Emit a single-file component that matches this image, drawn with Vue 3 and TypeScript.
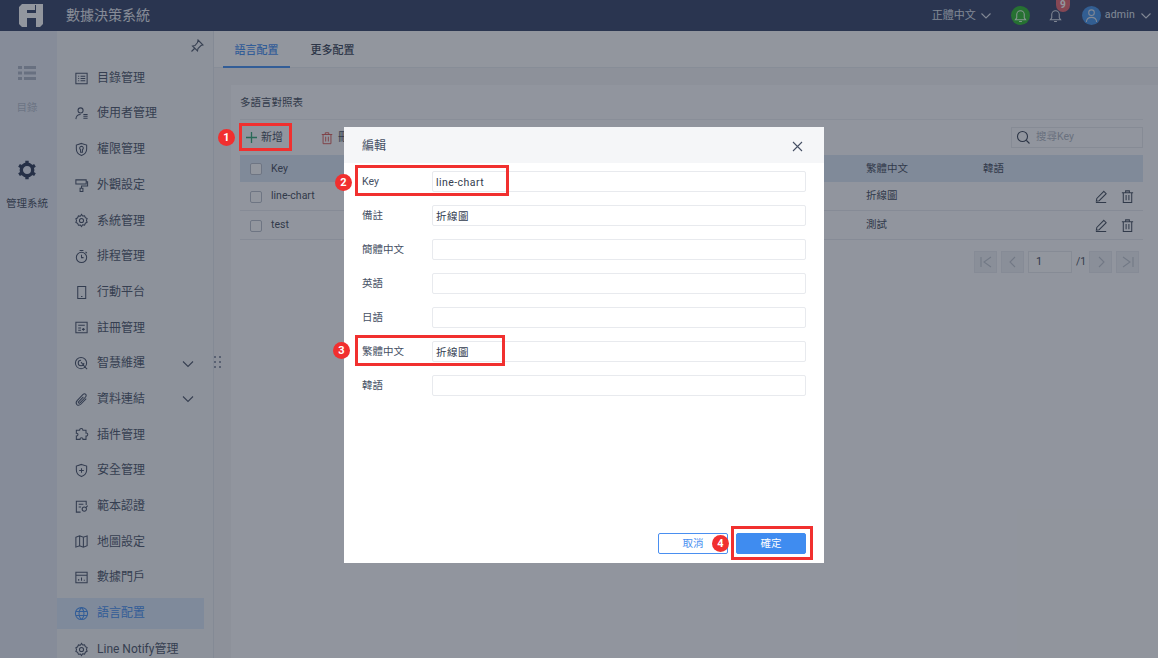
<script setup lang="ts">
const I: Record<string, string> = {
  list: 'M2 2.500h12v11H2zM4.500 5.500h1M7 5.500h5M4.500 8h1M7 8h5M4.500 10.500h1M7 10.500h5',
  user: 'M7 2a2.700 2.700 0 1 1 0 5.400A2.700 2.700 0 0 1 7 2zM2 14c.3-3.200 2.300-5 5-5M10 9h4.500M10 11h4.500M10 13h4.500',
  shield: 'M8 1.500l5.500 1.800v4.200c0 3.400-2.300 5.800-5.500 7-3.200-1.200-5.500-3.600-5.500-7V3.300zM8 4.500a2 2 0 0 1 1 3.700V11H7V8.200a2 2 0 0 1 1-3.700z',
  brush: 'M2 2h11v4.500H2zM13 4h1.500v4.500H8V11M6.500 11h3v3.500h-3z',
  gear: 'M8 1.500l1.200 1.700 2.100-.3.800 2 1.900 1-.7 2 .7 2-1.900 1-.8 2-2.100-.3L8 14.500l-1.200-1.700-2.100.3-.8-2-1.900-1 .7-2-.7-2 1.900-1 .8-2 2.100.3zM8 5.800a2.200 2.200 0 1 1 0 4.400 2.200 2.200 0 0 1 0-4.400z',
  clock: 'M8 3.500a5.500 5.500 0 1 1 0 11 5.500 5.500 0 0 1 0-11zM8 6v3.200h2.200M6 1.500h4M12.300 3l1.400 1.400',
  phone: 'M4 1.500h8.500v13H4zM7.500 12.300h1.500',
  reg: 'M2 2.500h12v11H2zM4.500 5.500h7M4.500 8.500h3M4.500 11h3M10 8.500v3M8.500 10h3',
  smart: 'M14 14l-2.500-2.500M7.500 1.500a6 6 0 1 1 0 12 6 6 0 0 1-6-6 6 6 0 0 1 6-6zM7.500 4.500a3 3 0 1 0 3 3M7.500 6.500l4 5',
  clip: 'M13 7l-5.500 5.800c-1.400 1.400-3.200 1.700-4.400.6-1.200-1.200-.9-3 .5-4.500l5.800-6c1-1 2.300-1.200 3.100-.4.800.8.600 2.100-.4 3.100l-5.700 5.900c-.5.500-1.100.6-1.500.2-.4-.4-.3-1 .2-1.500L10 5.300',
  puzzle: 'M6 3.500c0-2.500 3.500-2.500 3.500 0h3.300v3c2.500-.4 2.500 3.500 0 3.200v3.500H9.500c.3-2.300-3.300-2.300-3 0H2.500v-3.700c2.300.4 2.300-3.200 0-2.800V3.500z',
  plusShield: 'M8 1.500l5.500 1.800v4.200c0 3.400-2.300 5.800-5.500 7-3.200-1.200-5.500-3.600-5.500-7V3.300zM8 5.500v5M5.500 8h5',
  cert: 'M13 6.500V2.500H2.500v11.500H7M5 5.500h5M5 8.500h2.500M11 8.500a2.300 2.300 0 1 1 0 4.600 2.300 2.300 0 0 1 0-4.600zM14.500 7l-2 2.500',
  map: 'M2 3.500l4-1.500 4 1.500 4-1.500v10.500l-4 1.500-4-1.500-4 1.500zM6 2v10.500M10 3.500V14',
  portal: 'M2 2.500h12v11H2zM2 5.500h12M5 11.500V9.500M8 11.500V8M11 11.500v-1',
  globe: 'M8 1.500a6.500 6.500 0 1 1 0 13 6.500 6.500 0 0 1 0-13zM8 1.500c-3.600 3.800-3.600 9.200 0 13M8 1.500c3.600 3.800 3.600 9.200 0 13M2 5.800h12M2 10.200h12',
}
const menu = [
  { t: '目錄管理', i: I.list }, { t: '使用者管理', i: I.user }, { t: '權限管理', i: I.shield }, { t: '外觀設定', i: I.brush },
  { t: '系統管理', i: I.gear }, { t: '排程管理', i: I.clock }, { t: '行動平台', i: I.phone }, { t: '註冊管理', i: I.reg },
  { t: '智慧維運', i: I.smart, more: true }, { t: '資料連結', i: I.clip, more: true }, { t: '插件管理', i: I.puzzle },
  { t: '安全管理', i: I.plusShield }, { t: '範本認證', i: I.cert }, { t: '地圖設定', i: I.map }, { t: '數據門戶', i: I.portal },
  { t: '語言配置', i: I.globe, active: true }, { t: 'Line Notify管理', i: I.gear },
]
const rows = [{ k: 'line-chart', v: '折線圖' }, { k: 'test', v: '測試' }]
const fields = [
  { l: 'Key', v: 'line-chart' }, { l: '備註', v: '折線圖' }, { l: '簡體中文', v: '' }, { l: '英語', v: '' },
  { l: '日語', v: '' }, { l: '繁體中文', v: '折線圖' }, { l: '韓語', v: '' },
]
const pencil = 'M10.500 2.500l2.500 2.500-7.500 7.500-3 .5.500-3zM2 14.500h11'
const trash = 'M2 4h12M6 4V2h4v2M3.500 4v10.500h9V4M6.500 6.500v5.500M9.500 6.500v5.500'
</script>

<template>
  <div class="page">
    <header class="top">
      <svg class="logo" width="24" height="23" viewBox="0 0 24 23"><path fill-rule="evenodd" d="M3 0H24V20L21 23H17V14H8V23H3L0 20V3zM8 6H16V1H17V9H8z"/></svg>
      <span class="brand">數據決策系統</span>
      <div class="top-right">
        <span class="lang">正體中文</span>
        <svg class="chev" width="12" height="12" viewBox="0 0 12 12"><path d="M1.500 3.500L6 8l4.500-4.500"/></svg>
        <span class="green"><svg width="15" height="15" viewBox="0 0 16 16"><path d="M2.500 12.500h11l-1.500-2V7a4 4 0 0 0-8 0v3.500zM6.500 14.500h3"/></svg></span>
        <span class="bell">
          <svg width="15" height="15" viewBox="0 0 16 16"><path d="M2.500 12.500h11l-1.500-2V7a4 4 0 0 0-8 0v3.500zM6.500 14.500h3"/></svg>
          <b class="count">9</b>
        </span>
        <span class="avatar"><svg width="15" height="15" viewBox="0 0 16 16"><path d="M8 2a3 3 0 1 1 0 6 3 3 0 0 1 0-6zM2.500 15c.3-3.500 2.500-5 5.500-5s5.200 1.500 5.500 5"/></svg></span>
        <span class="admin">admin</span>
        <svg class="chev" width="12" height="12" viewBox="0 0 12 12"><path d="M1.500 3.500L6 8l4.500-4.500"/></svg>
      </div>
    </header>

    <div class="main">
      <aside class="rail">
        <div class="rail-item first">
          <svg width="18" height="14" viewBox="0 0 18 14" class="filled"><path d="M0 0h4v3H0zM6 0h12v3H6zM0 5.500h4v3H0zM6 5.500h12v3H6zM0 11h4v3H0zM6 11h12v3H6z"/></svg>
          <span class="rail-text">目錄</span>
        </div>
        <div class="rail-item second">
          <svg class="big-gear" width="20" height="20" viewBox="0 0 20 20"><circle cx="10" cy="10" r="5.700"/><path d="M10 .8V3.500M10 16.500V19.200M2.030 5.400L4.370 6.750M17.970 5.400L15.630 6.750M2.030 14.600L4.370 13.250M17.970 14.600L15.630 13.250"/></svg>
          <span class="rail-text">管理系統</span>
        </div>
      </aside>

      <nav class="menu">
        <div class="pin">
          <svg width="14" height="14" viewBox="0 0 14 14"><path d="M8 1l5 5-2 .5-3 3-.5 2.500-5-5L5 6.500l2.500-3zM4.500 9.500L1.500 12.500"/></svg>
        </div>
        <div v-for="m in menu" :key="m.t" class="item" :class="{ active: m.active }">
          <svg class="ico" width="16" height="16" viewBox="0 0 16 16"><path :d="m.i"/></svg>
          <span class="item-text">{{ m.t }}</span>
          <svg v-if="m.more" class="more" width="12" height="12" viewBox="0 0 12 12"><path d="M1 3.500L6 8.500l5-5"/></svg>
        </div>
      </nav>

      <section class="content">
        <div class="grip"><i></i><i></i><i></i><i></i><i></i><i></i></div>
        <div class="tabs">
          <span class="tab on">語言配置</span>
          <span class="tab">更多配置</span>
        </div>
        <div class="card">
          <div class="card-title">多語言對照表</div>
          <div class="tools">
            <span class="tool add">
              <svg width="11" height="11" viewBox="0 0 11 11"><path d="M5.500 0v11M0 5.500h11"/></svg>
              新增
            </span>
            <span class="tool del">
              <svg width="14" height="14" viewBox="0 0 16 16"><path :d="trash"/></svg>
              刪除
            </span>
            <label class="search">
              <svg width="15" height="15" viewBox="0 0 15 15"><path d="M6.500 1.500a5 5 0 1 1 0 10 5 5 0 0 1 0-10zM10.500 10.500l3 3"/></svg>
              搜尋Key
            </label>
          </div>
          <div class="tr head">
            <span class="box"></span><span>Key</span><span>繁體中文</span><span>韓語</span><span></span>
          </div>
          <div v-for="r in rows" :key="r.k" class="tr">
            <span class="box"></span><span>{{ r.k }}</span><span>{{ r.v }}</span><span></span>
            <span class="acts">
              <svg width="15" height="15" viewBox="0 0 16 16"><path :d="pencil"/></svg>
              <svg width="15" height="15" viewBox="0 0 16 16"><path :d="trash"/></svg>
            </span>
          </div>
          <div class="pager">
            <span class="pg"><svg width="14" height="14" viewBox="0 0 14 14"><path d="M2 2v10M12 2L5 7l7 5"/></svg></span>
            <span class="pg"><svg width="14" height="14" viewBox="0 0 14 14"><path d="M9 2L4 7l5 5"/></svg></span>
            <span class="pg-input">1</span>
            <span class="pg-total">/1</span>
            <span class="pg"><svg width="14" height="14" viewBox="0 0 14 14"><path d="M5 2l5 5-5 5"/></svg></span>
            <span class="pg"><svg width="14" height="14" viewBox="0 0 14 14"><path d="M12 2v10M2 2l7 5-7 5"/></svg></span>
          </div>
        </div>
      </section>
    </div>

    <div class="mask"></div>

    <div class="dialog">
      <div class="dlg-head">
        <span>編輯</span>
        <svg width="11" height="11" viewBox="0 0 11 11"><path d="M1 1l9 9M10 1l-9 9"/></svg>
      </div>
      <div class="dlg-body">
        <div v-for="f in fields" :key="f.l" class="field">
          <span class="f-label">{{ f.l }}</span>
          <span class="f-input">{{ f.v }}</span>
        </div>
      </div>
      <div class="dlg-foot">
        <span class="btn ghost">取消</span>
        <span class="btn primary">確定</span>
      </div>
    </div>

    <i class="mark m1"></i><i class="mark m2"></i><i class="mark m3"></i><i class="mark m4"></i>
    <b class="dot d1">1</b><b class="dot d2">2</b><b class="dot d3">3</b><b class="dot d4">4</b>
  </div>
</template>

<style>
html, body { margin: 0; padding: 0; }
</style>

<style scoped>
.page {
  position: relative; width: 1158px; height: 658px; overflow: hidden;
  display: flex; flex-direction: column; background: #f3f4f6;
  font: 12px/1.2 Roboto, "Noto Sans CJK TC", sans-serif; color: #3d4757;
}
svg { fill: none; stroke: currentColor; stroke-width: 1.100; flex: none; display: block; }
svg.filled { fill: currentColor; stroke: none; }

.top { height: 31px; flex: none; background: #2e3c62; color: #fff; display: flex; align-items: center; padding-left: 19px; }
.logo { fill: #fff; stroke: none; }
.brand { margin-left: 23px; font-size: 14px; color: #e8eaf0; }
.top-right { margin-left: auto; display: flex; align-items: center; color: #dfe3ec; }
.lang { font-size: 11px; }
.top-right .chev { margin-left: 4px; }
.green { width: 19px; height: 19px; margin-left: 19px; border-radius: 50%; background: #27b427; display: flex; align-items: center; justify-content: center; color: #e8ffe8; }
.bell { position: relative; margin-left: 18px; width: 16px; }
.count { position: absolute; left: 8px; top: -9px; width: 14px; height: 13px; border-radius: 0 0 7px 7px; background: #e5616b; color: #fff; font: 700 10px/11px Roboto, sans-serif; text-align: center; }
.avatar { width: 19px; height: 19px; margin-left: 18px; border-radius: 50%; background: #3e8fe6; display: flex; align-items: center; justify-content: center; }
.admin { margin-left: 4px; font-size: 10.500px; letter-spacing: .2px; }
.admin + .chev { margin: 0 6px 0 5px; }

.main { flex: 1; display: flex; min-height: 0; }
.rail { width: 57px; flex: none; box-sizing: border-box; padding-right: 3px; background: #e6ebf5; display: flex; flex-direction: column; align-items: center; color: #3d4757; }
.rail-item { display: flex; flex-direction: column; align-items: center; }
.rail-item.first { margin-top: 35px; color: #b4bbca; }
.rail-item.first svg { color: #aab2c3; }
.rail-item.second { margin-top: 45px; }
.big-gear { color: #263350; stroke-width: 3.400; }
.rail-text { margin-top: 22px; font-size: 10.500px; white-space: nowrap; }
.rail-item.second .rail-text { margin-top: 18px; }

.menu { width: 157px; flex: none; background: #f5f6f9; box-sizing: border-box; border-right: 1px solid #e3e6ec; padding-top: 8px; }
.pin { height: 23.500px; display: flex; justify-content: flex-end; padding-right: 9px; color: #4a5568; }
.item { height: 31px; margin-bottom: 4.700px; width: 147px; display: flex; align-items: center; padding-left: 17px; box-sizing: border-box; color: #465064; }
.item-text { margin-left: 8px; font-size: 12px; white-space: nowrap; }
.ico { width: 15px; height: 15px; color: #3f4a60; }
.more { margin-left: auto; margin-right: 10px; color: #465064; }
.item.active { background: #d9e7f9; color: #3f8cf0; }
.item.active .ico { color: #3f8cf0; }

.content { position: relative; flex: 1; min-width: 0; background: #f4f5f7; }
.grip { position: absolute; left: 0; top: 325px; width: 8px; display: grid; grid-template-columns: 2px 2px; gap: 3px 3px; }
.grip i { width: 2px; height: 2px; background: #8c95a6; }
.tabs { height: 37px; box-sizing: border-box; background: #fff; border-bottom: 1px solid #e9ecf0; display: flex; padding-left: 9px; font-size: 11px; font-weight: 500; }
.tab { width: 67px; height: 37px; line-height: 40px; text-align: center; box-sizing: border-box; margin-right: 9px; color: #333d50; }
.tab.on { color: #3f8cf0; border-bottom: 2px solid #3f8cf0; }

.card { margin: 17px 0 0 17px; height: 800px; background: #fdfdfe; padding: 0 15px 0 9px; }
.card-title { height: 34px; line-height: 35px; border-bottom: 1px solid #eceef2; font-size: 10.500px; }
.tools { height: 35px; display: flex; align-items: center; position: relative; }
.tool { display: flex; align-items: center; gap: 4px; font-size: 11px; }
.add { margin-left: 6px; }
.add svg { color: #2ba471; stroke-width: 1.300; }
.del { margin-left: 37px; }
.del svg { color: #d9534f; }
.search { margin-left: auto; width: 132px; height: 21px; box-sizing: border-box; border: 1px solid #e6e8ec; display: flex; align-items: center; gap: 5px; padding-left: 4px; color: #aeb4c0; font-size: 10.500px; }
.search svg { color: #333d50; }
.tr { display: grid; grid-template-columns: 31px 595px 117px 1fr 48px; align-items: center; height: 29px; padding-top: 1px; border-bottom: 1px solid #e6e9ee; box-sizing: border-box; font-size: 10.500px; }
.tr > .box { margin-left: 10px; }
.head { height: 27px; background: #dbe6f5; border-bottom: 0; }
.box { width: 12px; height: 12px; box-sizing: border-box; border: 1px solid #b7bdc9; border-radius: 2px; background: #fff; }
.acts { display: flex; gap: 11px; color: #3d4757; margin-left: -1px; }
.pager { display: flex; justify-content: flex-end; align-items: center; margin-top: 11px; padding-right: 4px; gap: 4px; }
.pg { width: 23px; height: 22px; background: #eff1f4; border: 1px solid #e7e9ee; box-sizing: border-box; display: flex; align-items: center; justify-content: center; color: #bdc3cd; }
.pg-input { width: 44px; height: 22px; box-sizing: border-box; border: 1px solid #e6e8ec; background: #fff; padding-left: 7px; line-height: 20px; font-size: 11px; }
.pg-total { width: 9px; font-size: 10.500px; }

.mask { position: absolute; inset: 0; background: rgba(37, 45, 61, .5); }

.dialog { position: absolute; left: 344px; top: 127px; width: 480px; height: 436px; background: #fff; display: flex; flex-direction: column; }
.dlg-head { height: 36px; flex: none; background: #f5f6f8; display: flex; align-items: center; justify-content: space-between; padding: 2px 21px 0 18px; box-sizing: border-box; font-size: 12px; color: #465064; }
.dlg-head svg { color: #465064; }
.dlg-body { padding: 8px 18px 0; display: flex; flex-direction: column; gap: 13px; }
.field { display: flex; align-items: center; height: 21px; font-size: 10.500px; color: #465064; }
.f-label { width: 70px; flex: none; margin-top: 2px; }
.f-input { flex: 1; height: 21px; box-sizing: border-box; border: 1px solid #e8eaee; border-radius: 2px; padding-left: 3px; line-height: 21px; color: #333d50; letter-spacing: .45px; }
.dlg-foot { margin-top: auto; padding: 0 18px 9px; display: flex; justify-content: flex-end; gap: 8px; }
.btn { width: 70px; height: 21px; line-height: 19px; text-align: center; box-sizing: border-box; border-radius: 2px; font-size: 10.500px; }
.ghost { border: 1px solid #4a8ff0; color: #4a8ff0; background: #fff; }
.primary { background: #3f8cf0; border: 1px solid #3f8cf0; color: #fff; }

.mark { position: absolute; box-sizing: border-box; border: 3px solid #f1302f; }
.m1 { left: 239px; top: 123px; width: 53px; height: 28px; }
.m2 { left: 355px; top: 165px; width: 154px; height: 31px; }
.m3 { left: 355px; top: 335px; width: 150px; height: 31px; }
.m4 { left: 731px; top: 526px; width: 82px; height: 34px; }
.dot { position: absolute; width: 17px; height: 17px; border-radius: 50%; background: #f12f2f; color: #fff; font: 700 11px/17px Roboto, sans-serif; text-align: center; }
.d1 { left: 218px; top: 129px; }
.d2 { left: 335px; top: 174px; }
.d3 { left: 333px; top: 342px; }
.d4 { left: 712px; top: 535px; }
</style>
